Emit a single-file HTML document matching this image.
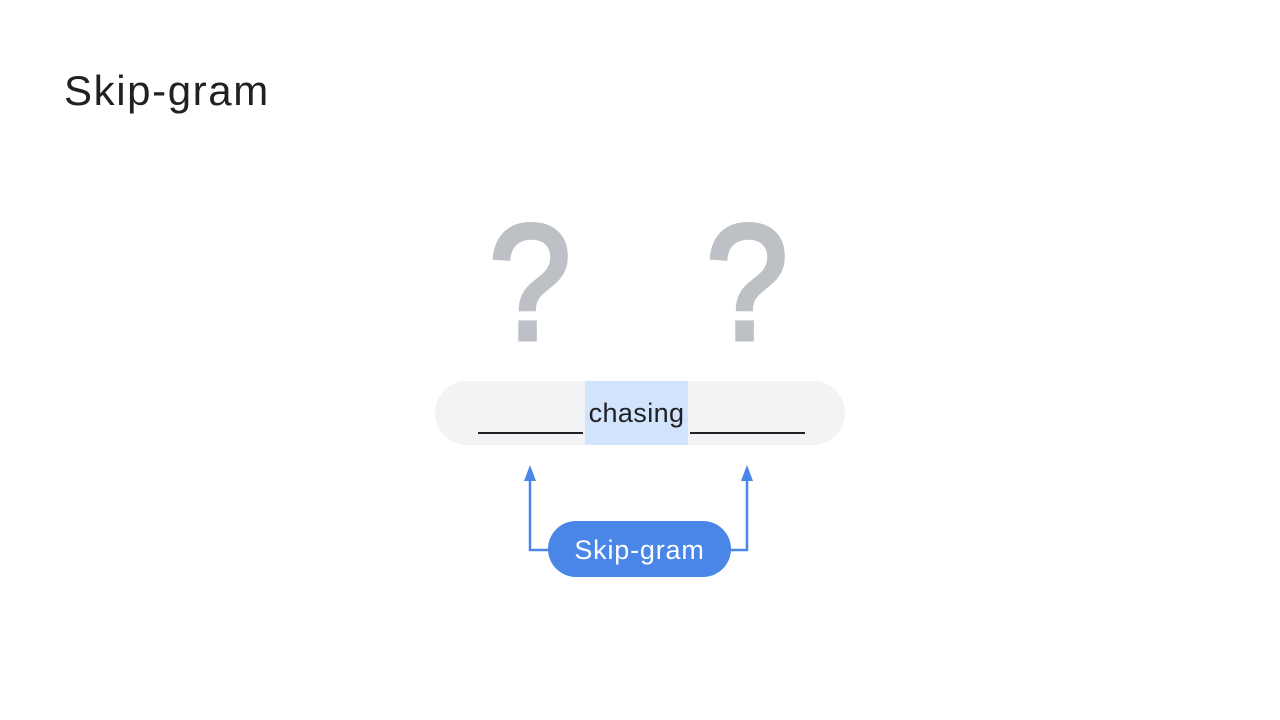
<!DOCTYPE html>
<html><head><style>
body{margin:0;width:1280px;height:720px;background:#fff;position:relative;overflow:hidden;font-family:"Liberation Sans",sans-serif}
.t{position:absolute;left:64px;top:67px;font-size:42px;color:#202124;letter-spacing:1.6px}
.q{position:absolute;top:201px;font-size:164px;color:#bdc1c6;line-height:164px;width:120px;text-align:center;-webkit-text-stroke:5px #bdc1c6;transform:scaleX(0.9)}
.bar{position:absolute;left:435px;top:381px;width:410px;height:64px;border-radius:32px;background:#f1f3f4}
.hl{position:absolute;left:585px;top:381px;width:103px;height:64px;background:#d2e3fc}
.w{position:absolute;left:585px;top:398px;width:103px;text-align:center;font-size:27px;color:#202124;letter-spacing:0.4px}
.ln{position:absolute;top:432px;height:2px;background:#202124}
.btn{position:absolute;left:548px;top:521px;width:183px;height:56px;border-radius:28px;background:#4a86e8;color:#fff;font-size:27px;letter-spacing:0.8px;text-align:center;line-height:58px}
</style></head><body>
<div class="t">Skip-gram</div>
<div class="q" style="left:470px">?</div>
<div class="q" style="left:687px">?</div>
<div class="bar"></div><div class="hl"></div>
<div class="w">chasing</div>
<div class="ln" style="left:478px;width:105px"></div>
<div class="ln" style="left:690px;width:115px"></div>
<svg style="position:absolute;left:0;top:0" width="1280" height="720">
<path d="M550 550H530V478M731 550H747V478" fill="none" stroke="#4a86e8" stroke-width="2.5"/>
<path d="M524 481L530 465L536 481Z M741 481L747 465L753 481Z" fill="#4a86e8"/>
</svg>
<div class="btn">Skip-gram</div>
</body></html>
